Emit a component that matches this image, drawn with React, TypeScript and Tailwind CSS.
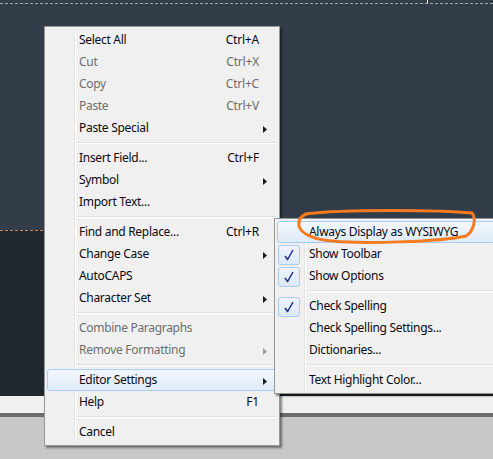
import React from "react";

type Item =
  | { sep: true }
  | {
      label: string;
      shortcut?: string;
      arrow?: boolean;
      disabled?: boolean;
      hl?: boolean;
      check?: boolean;
    };

const mainItems: Item[] = [
  { label: "Select All", shortcut: "Ctrl+A" },
  { label: "Cut", shortcut: "Ctrl+X", disabled: true },
  { label: "Copy", shortcut: "Ctrl+C", disabled: true },
  { label: "Paste", shortcut: "Ctrl+V", disabled: true },
  { label: "Paste Special", arrow: true },
  { sep: true },
  { label: "Insert Field...", shortcut: "Ctrl+F" },
  { label: "Symbol", arrow: true },
  { label: "Import Text..." },
  { sep: true },
  { label: "Find and Replace...", shortcut: "Ctrl+R" },
  { label: "Change Case", arrow: true },
  { label: "AutoCAPS" },
  { label: "Character Set", arrow: true },
  { sep: true },
  { label: "Combine Paragraphs", disabled: true },
  { label: "Remove Formatting", arrow: true, disabled: true },
  { sep: true },
  { label: "Editor Settings", arrow: true, hl: true },
  { label: "Help", shortcut: "F1" },
  { sep: true },
  { label: "Cancel" },
];

const subItems: Item[] = [
  { label: "Always Display as WYSIWYG", hl: true },
  { label: "Show Toolbar", check: true },
  { label: "Show Options", check: true },
  { sep: true },
  { label: "Check Spelling", check: true },
  { label: "Check Spelling Settings..." },
  { label: "Dictionaries..." },
  { sep: true },
  { label: "Text Highlight Color..." },
];

function Arrow({ disabled }: { disabled?: boolean }) {
  return (
    <svg
      width="4"
      height="7"
      viewBox="0 0 4 7"
      className="absolute right-[9px] top-[8px]"
    >
      <path d="M0 0 L4 3.5 L0 7 Z" fill={disabled ? "#9a9a9a" : "#1a1a1a"} />
    </svg>
  );
}

function Check() {
  return (
    <div className="absolute left-0 top-[1px] w-[22px] h-[20px] rounded-[3px] border border-[#aecbee] bg-gradient-to-b from-[#eef4fc] to-[#dce8f8] flex items-center justify-center">
      <svg width="10" height="12" viewBox="0 0 10 12">
        <path
          d="M1 7 L3.6 10.5 L9 1"
          fill="none"
          stroke="#1c2a8a"
          strokeWidth="1.5"
          strokeLinejoin="round"
        />
      </svg>
    </div>
  );
}

function MenuRows({ items }: { items: Item[] }) {
  return (
    <>
      {items.map((it, i) => {
        if ("sep" in it) {
          return (
            <div key={i} className="h-[8px] flex flex-col justify-center pl-[28px]">
              <div className="h-[1px] bg-[#e0e0e0]" />
              <div className="h-[1px] bg-white" />
            </div>
          );
        }
        return (
          <div
            key={i}
            className={
              "relative h-[22px] flex items-center pl-[32px] " +
              (it.hl
                ? "rounded-[3px] border border-[#a8cdf0] bg-gradient-to-b from-[#f2f7fd] to-[#dfebf8] "
                : "border border-transparent ")
            }
          >
            {it.check && <Check />}
            <span
              className={
                "whitespace-nowrap leading-none -ml-[1px] tracking-[-0.3px] " +
                (it.disabled ? "text-[#6d6d6d]" : "text-[#0a0a14]")
              }
            >
              {it.label}
            </span>
            {it.shortcut && (
              <span
                className={
                  "ml-auto mr-[17px] whitespace-nowrap leading-none tracking-[-0.2px] " +
                  (it.disabled ? "text-[#6d6d6d]" : "text-[#0a0a14]")
                }
              >
                {it.shortcut}
              </span>
            )}
            {it.arrow && <Arrow disabled={it.disabled} />}
          </div>
        );
      })}
    </>
  );
}

export default function App() {
  return (
    <div
      className="relative w-[493px] h-[459px] overflow-hidden flex flex-col text-[12px]"
      style={{ fontFamily: '"Noto Sans", "Open Sans", sans-serif' }}
    >
      {/* background layers */}
      <div className="h-[230px] bg-[#333d4a] pt-[3px]">
        <div className="border-t border-dashed border-[#a3a7ad]" />
      </div>
      <div className="h-[166px] bg-[#21272f] border-t border-dashed border-[#c8875a]" />
      <div className="h-[17px] bg-[#f0f0f0]" />
      <div className="h-[4px] bg-[#6b6b6b]" />
      <div className="flex-1 bg-[#c8c8c8]" />
      <div className="absolute left-[427px] top-0 w-[1px] h-[3px] bg-white" />

      {/* main context menu */}
      <div className="absolute left-[44px] top-[26px] w-[236px] border border-[#979797] bg-[#f0f0f0] p-[2px] shadow-[2px_2px_2px_rgba(0,0,0,0.45)]">
        <div className="absolute left-[29px] top-[2px] bottom-[2px] w-[2px] flex">
          <div className="w-[1px] bg-[#e2e3e3]" />
          <div className="w-[1px] bg-white" />
        </div>
        <MenuRows items={mainItems} />
      </div>

      {/* submenu */}
      <div className="absolute left-[274px] top-[218px] w-[240px] border border-[#979797] bg-[#f0f0f0] p-[2px] shadow-[2px_2px_2px_rgba(0,0,0,0.45)]">
        <div className="absolute left-[29px] top-[2px] bottom-[2px] w-[2px] flex">
          <div className="w-[1px] bg-[#e2e3e3]" />
          <div className="w-[1px] bg-white" />
        </div>
        <MenuRows items={subItems} />
      </div>

      {/* orange annotation loop */}
      <svg
        className="absolute left-0 top-0 pointer-events-none"
        width="493"
        height="459"
        viewBox="0 0 493 459"
      >
        <path
          d="M305 214 C345 209 440 210 472 213 C477 219 473 232 466 236 C440 242 360 244 333 241 C315 240 301 234 299 226 C298 220 300 216 307 214"
          fill="none"
          stroke="#f47b20"
          strokeWidth="3"
          strokeLinecap="round"
        />
      </svg>
    </div>
  );
}
